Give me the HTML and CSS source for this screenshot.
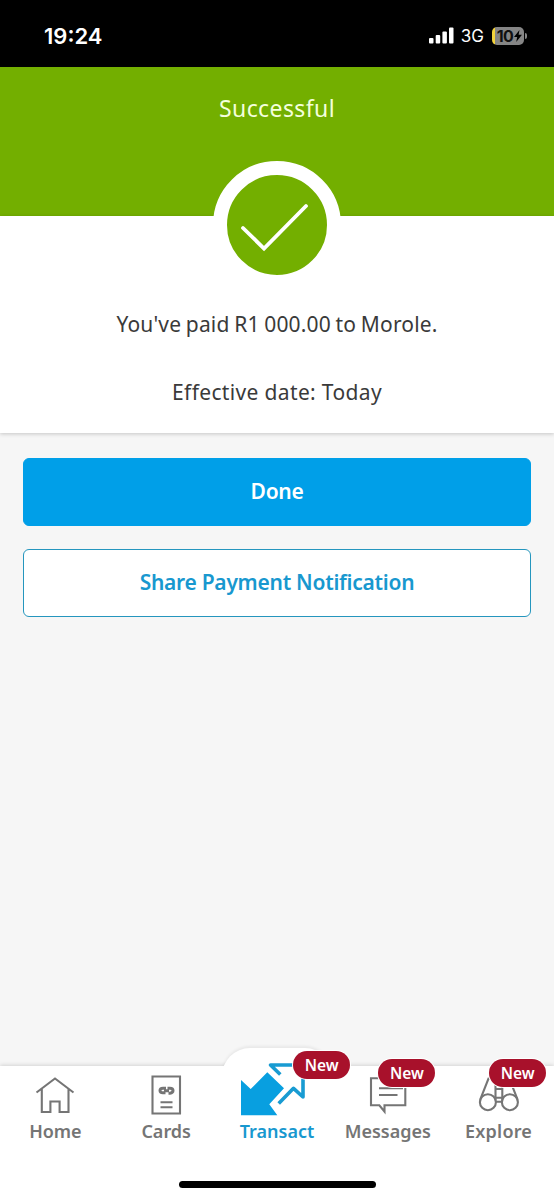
FILE: index.html
```
<!DOCTYPE html>
<html lang="en">

<head>
    <meta charset="UTF-8">
    <meta name="viewport" content="width=device-width, initial-scale=1.0">
    <title>Payment Successful</title>
    <link rel="stylesheet" href="styles.css">
</head>

<body>
    <!-- Status bar -->
    <div class="status-bar">
        <span class="time">19:24</span>
        <div class="status-icons">
            <svg class="signal" width="25" height="17" viewBox="0 0 25 17" fill="#fff">
                <rect x="0" y="11" width="4.5" height="5.5" rx="1" />
                <rect x="6.7" y="8" width="4.5" height="8.5" rx="1" />
                <rect x="13.4" y="4.5" width="4.5" height="12" rx="1" />
                <rect x="20" y="0.5" width="4.5" height="16" rx="1" />
            </svg>
            <span class="network">3G</span>
            <div class="battery">
                <span>10</span>
                <svg width="8" height="12" viewBox="0 0 8 12">
                    <path d="M5.5 0L0 7h3.2L2.2 12 8 4.8H4.6z" />
                </svg>
            </div>
        </div>
    </div>

    <!-- Result -->
    <header class="header">
        <h1>Successful</h1>
        <div class="check">
            <svg width="100" height="100" viewBox="0 0 100 100">
                <path d="M16 53L37 73.5L79 31" fill="none" stroke="#fff" stroke-width="3.8" stroke-linecap="round" />
            </svg>
        </div>
    </header>

    <section class="details">
        <p class="paid">You've paid R1 000.00 to Morole.</p>
        <p class="date">Effective date: Today</p>
    </section>

    <main class="actions">
        <button class="btn btn-done">Done</button>
        <button class="btn btn-share">Share Payment Notification</button>
    </main>

    <!-- Bottom navigation -->
    <nav class="tabs">
        <a class="tab" href="#">
            <svg class="icon" viewBox="0 0 76 58">
                <path d="M19.5 32.5L38 18.5L56.5 32.5M24.8 29V52H33.4V41.5H42.6V52H51.5V29" />
            </svg>
            <span class="label">Home</span>
        </a>
        <a class="tab" href="#">
            <svg class="icon" viewBox="0 0 76 58">
                <path d="M24.5 16.5H52V53.5H24.5zM32.5 42.3H44.5M32.5 47.3H44.5" />
                <path class="thick" d="M38 28.3H35Q32 28.3 32 30.6T35 32.8H37.5M39.5 28.3H42Q45 28.3 45 30.6T42 33.2H40.5M36 30.8H41" />
            </svg>
            <span class="label">Cards</span>
        </a>
        <a class="tab active" href="#">
            <svg class="icon" viewBox="0 0 76 58">
                <path class="fill" d="M2 20L11.7 29L28.3 12.3L45 28.3L30.3 44.3L38.3 55.3H2z" />
                <path class="arrow" d="M41.3 14.5L31.5 5H64V37L54.5 28.3L39.7 43.5" />
            </svg>
            <span class="label">Transact</span>
            <span class="new">New</span>
        </a>
        <a class="tab" href="#">
            <svg class="icon" viewBox="0 0 76 58">
                <path d="M21 18.2H55.3V45.3H34.5V51.5L29.3 45.3H21zM29 28.3H53M29 35H47.5" />
            </svg>
            <span class="label">Messages</span>
            <span class="new">New</span>
        </a>
        <a class="tab" href="#">
            <svg class="icon" viewBox="0 0 76 58">
                <circle cx="26.9" cy="42.2" r="8" />
                <circle cx="48.9" cy="42.2" r="8" />
                <path d="M19.5 38.8L27.5 18.5H34.5V39.5M56.3 38.8L48.3 18.5H41.3V39.5M34.5 29H41.3M34.5 37.8H41.3M34.8 41.8H41" />
            </svg>
            <span class="label explore">Explore</span>
            <span class="new">New</span>
        </a>
        <div class="home-indicator"></div>
    </nav>
</body>

</html>
```
FILE: styles.css
```
* {
    box-sizing: border-box;
}

body {
    margin: 0;
    height: 1200px;
    display: flex;
    flex-direction: column;
    font-family: "Noto Sans", sans-serif;
    background-color: #f6f6f6;
    color: #3a3a3a;
    overflow: hidden;
}

/* Status bar */
.status-bar {
    height: 67px;
    padding: 4px 30px 0 44px;
    display: flex;
    justify-content: space-between;
    align-items: center;
    background-color: #000;
    color: #fff;
    font-family: Inter, sans-serif;
}

.time {
    font-size: 22px;
    font-weight: 600;
}

.status-icons {
    display: flex;
    align-items: center;
}

.network {
    margin: 0 8px 0 7px;
    font-size: 17px;
}

.battery {
    position: relative;
    width: 32px;
    height: 18px;
    padding-left: 3px;
    display: flex;
    align-items: center;
    justify-content: center;
    gap: 1px;
    border-radius: 5px;
    background: linear-gradient(to right, #f3d33c 3.5px, #858585 3.5px);
    color: #111;
    font-size: 16px;
    font-weight: 700;
    letter-spacing: -0.5px;
}

.battery::after {
    content: "";
    position: absolute;
    right: -3px;
    top: 6px;
    width: 2px;
    height: 6px;
    border-radius: 0 2px 2px 0;
    background-color: #858585;
}

/* Result */
.header {
    height: 149px;
    padding-top: 24px;
    display: flex;
    flex-direction: column;
    align-items: center;
    background-color: #73af00;
}

.header h1 {
    margin: 0;
    font-size: 23px;
    font-weight: 400;
    line-height: 34px;
    color: #f4ffdc;
    letter-spacing: 0.4px;
}

.check {
    flex: none;
    margin-top: 36px;
    width: 128px;
    height: 128px;
    border: 14px solid #fff;
    border-radius: 50%;
    background-color: #73af00;
}

.check,
.check svg {
    display: block;
    z-index: 1;
}

.details {
    height: 217px;
    padding-top: 92px;
    background-color: #fff;
    box-shadow: 0 1px 4px rgba(0, 0, 0, 0.2);
    text-align: center;
    font-size: 21px;
    line-height: 32px;
}

.details p {
    margin: 0 0 36px;
}

.details .paid {
    letter-spacing: 0.15px;
    word-spacing: -0.9px;
}

.details .date {
    letter-spacing: 0.35px;
}

/* Buttons */
.actions {
    flex: 1;
    padding: 25px 23px;
    display: flex;
    flex-direction: column;
    gap: 23px;
}

.btn {
    height: 68px;
    padding: 0 0 2px;
    border: 1.5px solid #009fe8;
    border-radius: 6px;
    font-family: inherit;
    font-size: 21px;
    font-weight: 600;
    letter-spacing: -0.27px;
}

.btn-done {
    background-color: #009fe8;
    color: #fff;
}

.btn-share {
    border-color: #2596be;
    background-color: #fff;
    color: #1898cf;
}

/* Bottom navigation */
.tabs {
    position: relative;
    height: 134px;
    display: flex;
    background-color: #fff;
    box-shadow: 0 -1px 4px rgba(0, 0, 0, 0.14);
}

.tab {
    position: relative;
    flex: 1;
    display: flex;
    flex-direction: column;
    align-items: center;
    color: #757575;
    text-decoration: none;
}

.icon {
    position: relative;
    flex: none;
    width: 76px;
    height: 58px;
    margin-top: -6px;
    fill: none;
    stroke: #757575;
    stroke-width: 2.1;
}

.icon .thick {
    stroke-width: 3;
}

.icon .fill {
    fill: #089fe0;
    stroke: none;
}

.icon .arrow {
    stroke: #189bd2;
    stroke-width: 3.6;
    stroke-linejoin: round;
}

.label {
    position: relative;
    line-height: 26px;
    font-size: 18px;
    font-weight: 600;
}

.explore {
    letter-spacing: 0.2px;
}

.active {
    color: #1898cf;
}

/* raised bump behind the selected tab */
.active::before {
    content: "";
    position: absolute;
    top: -18px;
    left: 0;
    width: 111px;
    height: 60px;
    border-radius: 28px 28px 0 0;
    background-color: #fff;
    box-shadow: 0 -2px 3px rgba(0, 0, 0, 0.06);
}

.active::after {
    content: "";
    position: absolute;
    top: 0;
    left: -6px;
    width: 123px;
    height: 60px;
    background-color: #fff;
}

.active .icon,
.active .label {
    z-index: 1;
}

.new {
    position: absolute;
    z-index: 2;
    top: -7px;
    left: 46px;
    width: 57px;
    height: 28px;
    border-radius: 14px;
    background-color: #a8112b;
    box-shadow: 0 0 0 1px #fff;
    color: #fff;
    text-align: center;
    font-size: 15.5px;
    font-weight: 600;
    line-height: 28px;
}

.active .new {
    top: -15px;
    left: 71.5px;
}

.home-indicator {
    position: absolute;
    left: 179px;
    bottom: 12px;
    width: 197px;
    height: 7px;
    border-radius: 4px;
    background-color: #000;
}
```
